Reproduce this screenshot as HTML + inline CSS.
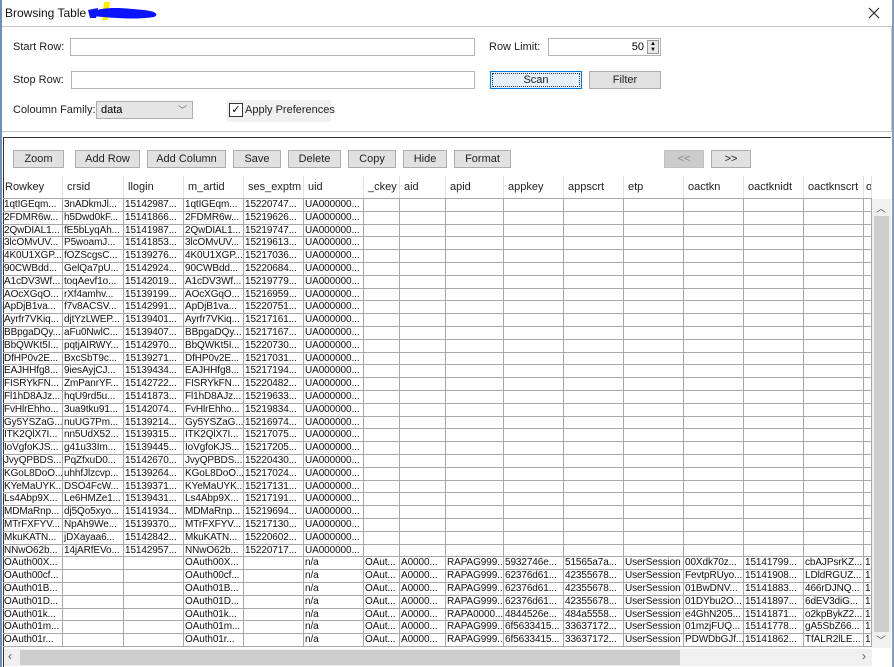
<!DOCTYPE html>
<html><head><meta charset="utf-8"><style>
*{box-sizing:border-box;margin:0;padding:0}
body{width:894px;height:667px;overflow:hidden;background:#fff;font-family:"Liberation Sans",sans-serif;font-size:11px;color:#000;position:relative}
.a{position:absolute}
.lbl{position:absolute;font-size:11px;color:#222}
.inp{position:absolute;background:#fff;border:1px solid #b4b4b4;height:18px}
.btn{position:absolute;background:#e1e1e1;border:1px solid #adadad;height:18px;text-align:center;line-height:16px;font-size:11px;color:#222}
.grid{position:absolute;left:3px;top:199px;display:grid;grid-template-columns:60px 61px 60px 60px 60px 60px 36px 46px 58px 60px 60px 60px 60px 60px 60px 8px;grid-auto-rows:12.8px;width:869px}
.grid div{border-right:1px solid #a8a8a8;border-bottom:1px solid #a8a8a8;white-space:nowrap;overflow:hidden;line-height:12px;font-size:10px;letter-spacing:-0.1px;padding-left:1px;color:#111}
.hdr{position:absolute;left:3px;top:176px;height:23px;width:869px;display:grid;grid-template-columns:60px 61px 60px 60px 60px 60px 36px 46px 58px 60px 60px 60px 60px 60px 60px 8px;border-bottom:1px solid #a8a8a8}
.hdr div{border-right:1px solid #e0e0e0;line-height:22px;padding-left:4px;font-size:11px;white-space:nowrap;overflow:hidden;color:#222}
</style></head><body>
<div class="a" style="left:0;top:0;width:2px;height:667px;background:#6b8fb5"></div>
<div class="a" style="left:892px;top:0;width:2px;height:667px;background:#8a9db8"></div>
<div class="a" style="left:5px;top:6px;font-size:12px;color:#111">Browsing Table :</div>
<svg class="a" style="left:84px;top:0" width="80" height="24"><path d="M20 2 L26 2 L24 20 L18 20Z" fill="#ffee00"/><path d="M8 12 C20 6 40 8 60 10 C70 11 76 14 70 17 C50 20 30 18 8 16 Z" fill="#0a14ff"/><path d="M4 10 L14 8 L12 18 L6 18Z" fill="#0a14ff"/></svg>
<svg class="a" style="left:868px;top:7px" width="12" height="12"><path d="M1 1 L11 11 M11 1 L1 11" stroke="#222" stroke-width="1.1"/></svg>
<div class="a" style="left:2px;top:26px;width:890px;height:106px;border-top:1px solid #c8c8c8;border-bottom:1px solid #c8c8c8;border-right:1px solid #c8c8c8"></div>
<div class="lbl" style="left:13px;top:41px">Start Row:</div>
<div class="inp" style="left:70px;top:38px;width:405px"></div>
<div class="lbl" style="left:489px;top:41px">Row Limit:</div>
<div class="inp" style="left:548px;top:38px;width:113px"><span style="position:absolute;right:16px;top:2px">50</span><span style="position:absolute;right:1px;top:1px;width:12px;height:14px;background:#e6e6e6;border:1px solid #999;font-size:6px;line-height:6px;text-align:center">▲<br>▼</span></div>
<div class="lbl" style="left:13px;top:74px">Stop Row:</div>
<div class="inp" style="left:71px;top:71px;width:404px"></div>
<div class="btn" style="left:490px;top:71px;width:92px;background:#e5f1fb;border:1px solid #0078d7;outline:1px dotted #333;outline-offset:-3px">Scan</div>
<div class="btn" style="left:589px;top:71px;width:72px">Filter</div>
<div class="lbl" style="left:13px;top:104px">Coloumn Family:</div>
<div class="a" style="left:96px;top:101px;width:97px;height:18px;background:#e5e5e5;border:1px solid #adadad;padding:2px 4px">data<span style="position:absolute;right:5px;top:1px;color:#666;font-size:9px">﹀</span></div>
<div class="a" style="left:227px;top:100px;width:104px;height:22px;background:#f0f0f0"></div>
<div class="a" style="left:229px;top:103px;width:14px;height:14px;border:1px solid #333;background:#fff;font-size:11px;line-height:12px;text-align:center">✓</div>
<div class="lbl" style="left:245px;top:104px">Apply Preferences</div>
<div class="a" style="left:3px;top:137px;width:888px;height:530px;border-top:1px solid #333;border-left:1px solid #333"></div>
<div class="btn" style="left:13px;top:150px;width:51px">Zoom</div>
<div class="btn" style="left:75px;top:150px;width:65px">Add Row</div>
<div class="btn" style="left:147px;top:150px;width:79px">Add Column</div>
<div class="btn" style="left:233px;top:150px;width:48px">Save</div>
<div class="btn" style="left:288px;top:150px;width:53px">Delete</div>
<div class="btn" style="left:348px;top:150px;width:48px">Copy</div>
<div class="btn" style="left:403px;top:150px;width:44px">Hide</div>
<div class="btn" style="left:454px;top:150px;width:57px">Format</div>
<div class="btn" style="left:664px;top:150px;width:40px;background:#ccc;border-color:#bfbfbf;color:#888">&lt;&lt;</div>
<div class="btn" style="left:711px;top:150px;width:40px">&gt;&gt;</div>
<div class="hdr"><div style="padding-left:2px">Rowkey</div><div>crsid</div><div>llogin</div><div>m_artid</div><div>ses_exptm</div><div>uid</div><div>_ckey</div><div>aid</div><div>apid</div><div>appkey</div><div>appscrt</div><div>etp</div><div>oactkn</div><div>oactknidt</div><div>oactknscrt</div><div style="padding-left:2px">o</div></div>
<div class="grid">
<div>1qtIGEqm...</div><div>3nADkmJl...</div><div>15142987...</div><div>1qtIGEqm...</div><div>15220747...</div><div>UA000000...</div><div></div><div></div><div></div><div></div><div></div><div></div><div></div><div></div><div></div><div></div>
<div>2FDMR6w...</div><div>h5Dwd0kF...</div><div>15141866...</div><div>2FDMR6w...</div><div>15219626...</div><div>UA000000...</div><div></div><div></div><div></div><div></div><div></div><div></div><div></div><div></div><div></div><div></div>
<div>2QwDIAL1...</div><div>fE5bLyqAh...</div><div>15141987...</div><div>2QwDIAL1...</div><div>15219747...</div><div>UA000000...</div><div></div><div></div><div></div><div></div><div></div><div></div><div></div><div></div><div></div><div></div>
<div>3lcOMvUV...</div><div>P5woamJ...</div><div>15141853...</div><div>3lcOMvUV...</div><div>15219613...</div><div>UA000000...</div><div></div><div></div><div></div><div></div><div></div><div></div><div></div><div></div><div></div><div></div>
<div>4K0U1XGP...</div><div>fOZScgsC...</div><div>15139276...</div><div>4K0U1XGP...</div><div>15217036...</div><div>UA000000...</div><div></div><div></div><div></div><div></div><div></div><div></div><div></div><div></div><div></div><div></div>
<div>90CWBdd...</div><div>GelQa7pU...</div><div>15142924...</div><div>90CWBdd...</div><div>15220684...</div><div>UA000000...</div><div></div><div></div><div></div><div></div><div></div><div></div><div></div><div></div><div></div><div></div>
<div>A1cDV3Wf...</div><div>toqAevf1o...</div><div>15142019...</div><div>A1cDV3Wf...</div><div>15219779...</div><div>UA000000...</div><div></div><div></div><div></div><div></div><div></div><div></div><div></div><div></div><div></div><div></div>
<div>AOcXGqO...</div><div>rXf4amhv...</div><div>15139199...</div><div>AOcXGqO...</div><div>15216959...</div><div>UA000000...</div><div></div><div></div><div></div><div></div><div></div><div></div><div></div><div></div><div></div><div></div>
<div>ApDjB1va...</div><div>f7v8ACSV...</div><div>15142991...</div><div>ApDjB1va...</div><div>15220751...</div><div>UA000000...</div><div></div><div></div><div></div><div></div><div></div><div></div><div></div><div></div><div></div><div></div>
<div>Ayrfr7VKiq...</div><div>djtYzLWEP...</div><div>15139401...</div><div>Ayrfr7VKiq...</div><div>15217161...</div><div>UA000000...</div><div></div><div></div><div></div><div></div><div></div><div></div><div></div><div></div><div></div><div></div>
<div>BBpgaDQy...</div><div>aFu0NwlC...</div><div>15139407...</div><div>BBpgaDQy...</div><div>15217167...</div><div>UA000000...</div><div></div><div></div><div></div><div></div><div></div><div></div><div></div><div></div><div></div><div></div>
<div>BbQWKt5I...</div><div>pqtjAIRWY...</div><div>15142970...</div><div>BbQWKt5I...</div><div>15220730...</div><div>UA000000...</div><div></div><div></div><div></div><div></div><div></div><div></div><div></div><div></div><div></div><div></div>
<div>DfHP0v2E...</div><div>BxcSbT9c...</div><div>15139271...</div><div>DfHP0v2E...</div><div>15217031...</div><div>UA000000...</div><div></div><div></div><div></div><div></div><div></div><div></div><div></div><div></div><div></div><div></div>
<div>EAJHHfg8...</div><div>9iesAyjCJ...</div><div>15139434...</div><div>EAJHHfg8...</div><div>15217194...</div><div>UA000000...</div><div></div><div></div><div></div><div></div><div></div><div></div><div></div><div></div><div></div><div></div>
<div>FISRYkFN...</div><div>ZmPanrYF...</div><div>15142722...</div><div>FISRYkFN...</div><div>15220482...</div><div>UA000000...</div><div></div><div></div><div></div><div></div><div></div><div></div><div></div><div></div><div></div><div></div>
<div>Fl1hD8AJz...</div><div>hqU9rd5u...</div><div>15141873...</div><div>Fl1hD8AJz...</div><div>15219633...</div><div>UA000000...</div><div></div><div></div><div></div><div></div><div></div><div></div><div></div><div></div><div></div><div></div>
<div>FvHlrEhho...</div><div>3ua9tku91...</div><div>15142074...</div><div>FvHlrEhho...</div><div>15219834...</div><div>UA000000...</div><div></div><div></div><div></div><div></div><div></div><div></div><div></div><div></div><div></div><div></div>
<div>Gy5YSZaG...</div><div>nuUG7Pm...</div><div>15139214...</div><div>Gy5YSZaG...</div><div>15216974...</div><div>UA000000...</div><div></div><div></div><div></div><div></div><div></div><div></div><div></div><div></div><div></div><div></div>
<div>ITK2QlX7I...</div><div>nn5UdX52...</div><div>15139315...</div><div>ITK2QlX7I...</div><div>15217075...</div><div>UA000000...</div><div></div><div></div><div></div><div></div><div></div><div></div><div></div><div></div><div></div><div></div>
<div>IoVgfoKJS...</div><div>g41u33Im...</div><div>15139445...</div><div>IoVgfoKJS...</div><div>15217205...</div><div>UA000000...</div><div></div><div></div><div></div><div></div><div></div><div></div><div></div><div></div><div></div><div></div>
<div>JvyQPBDS...</div><div>PqZfxuD0...</div><div>15142670...</div><div>JvyQPBDS...</div><div>15220430...</div><div>UA000000...</div><div></div><div></div><div></div><div></div><div></div><div></div><div></div><div></div><div></div><div></div>
<div>KGoL8DoO...</div><div>uhhfJlzcvp...</div><div>15139264...</div><div>KGoL8DoO...</div><div>15217024...</div><div>UA000000...</div><div></div><div></div><div></div><div></div><div></div><div></div><div></div><div></div><div></div><div></div>
<div>KYeMaUYK...</div><div>DSO4FcW...</div><div>15139371...</div><div>KYeMaUYK...</div><div>15217131...</div><div>UA000000...</div><div></div><div></div><div></div><div></div><div></div><div></div><div></div><div></div><div></div><div></div>
<div>Ls4Abp9X...</div><div>Le6HMZe1...</div><div>15139431...</div><div>Ls4Abp9X...</div><div>15217191...</div><div>UA000000...</div><div></div><div></div><div></div><div></div><div></div><div></div><div></div><div></div><div></div><div></div>
<div>MDMaRnp...</div><div>dj5Qo5xyo...</div><div>15141934...</div><div>MDMaRnp...</div><div>15219694...</div><div>UA000000...</div><div></div><div></div><div></div><div></div><div></div><div></div><div></div><div></div><div></div><div></div>
<div>MTrFXFYV...</div><div>NpAh9We...</div><div>15139370...</div><div>MTrFXFYV...</div><div>15217130...</div><div>UA000000...</div><div></div><div></div><div></div><div></div><div></div><div></div><div></div><div></div><div></div><div></div>
<div>MkuKATN...</div><div>jDXayaa6...</div><div>15142842...</div><div>MkuKATN...</div><div>15220602...</div><div>UA000000...</div><div></div><div></div><div></div><div></div><div></div><div></div><div></div><div></div><div></div><div></div>
<div>NNwO62b...</div><div>14jARfEVo...</div><div>15142957...</div><div>NNwO62b...</div><div>15220717...</div><div>UA000000...</div><div></div><div></div><div></div><div></div><div></div><div></div><div></div><div></div><div></div><div></div>
<div>OAuth00X...</div><div></div><div></div><div>OAuth00X...</div><div></div><div>n/a</div><div>OAut...</div><div>A0000...</div><div>RAPAG999...</div><div>5932746e...</div><div>51565a7a...</div><div>UserSession</div><div>00Xdk70z...</div><div>15141799...</div><div>cbAJPsrKZ...</div><div>1</div>
<div>OAuth00cf...</div><div></div><div></div><div>OAuth00cf...</div><div></div><div>n/a</div><div>OAut...</div><div>A0000...</div><div>RAPAG999...</div><div>62376d61...</div><div>42355678...</div><div>UserSession</div><div>FevtpRUyo...</div><div>15141908...</div><div>LDldRGUZ...</div><div>1</div>
<div>OAuth01B...</div><div></div><div></div><div>OAuth01B...</div><div></div><div>n/a</div><div>OAut...</div><div>A0000...</div><div>RAPAG999...</div><div>62376d61...</div><div>42355678...</div><div>UserSession</div><div>01BwDNV...</div><div>15141883...</div><div>466rDJNQ...</div><div>1</div>
<div>OAuth01D...</div><div></div><div></div><div>OAuth01D...</div><div></div><div>n/a</div><div>OAut...</div><div>A0000...</div><div>RAPAG999...</div><div>62376d61...</div><div>42355678...</div><div>UserSession</div><div>01DYbu2O...</div><div>15141897...</div><div>6dEV3diG...</div><div>1</div>
<div>OAuth01k...</div><div></div><div></div><div>OAuth01k...</div><div></div><div>n/a</div><div>OAut...</div><div>A0000...</div><div>RAPA0000...</div><div>4844526e...</div><div>484a5558...</div><div>UserSession</div><div>e4GhN205...</div><div>15141871...</div><div>o2kpBykZ2...</div><div>1</div>
<div>OAuth01m...</div><div></div><div></div><div>OAuth01m...</div><div></div><div>n/a</div><div>OAut...</div><div>A0000...</div><div>RAPAG999...</div><div>6f5633415...</div><div>33637172...</div><div>UserSession</div><div>01mzjFUQ...</div><div>15141778...</div><div>gA5SbZ66...</div><div>1</div>
<div>OAuth01r...</div><div></div><div></div><div>OAuth01r...</div><div></div><div>n/a</div><div>OAut...</div><div>A0000...</div><div>RAPAG999...</div><div>6f5633415...</div><div>33637172...</div><div>UserSession</div><div>PDWDbGJf...</div><div>15141862...</div><div>TfALR2lLE...</div><div>1</div>
</div>
<div class="a" style="left:872px;top:199px;width:19px;height:449px;background:#f0f0f0"></div>
<div class="a" style="left:874px;top:216px;width:15px;height:416px;background:#cdcdcd"></div>
<div class="a" style="left:876px;top:200px;font-size:10px;color:#555">︿</div>
<div class="a" style="left:876px;top:632px;font-size:10px;color:#555">﹀</div>
<div class="a" style="left:4px;top:649px;width:868px;height:17px;background:#f0f0f0"></div>
<div class="a" style="left:20px;top:650px;width:660px;height:15px;background:#cdcdcd"></div>
<div class="a" style="left:8px;top:649px;font-size:12px;color:#555">‹</div>
<div class="a" style="left:862px;top:649px;font-size:12px;color:#555">›</div>
</body></html>
